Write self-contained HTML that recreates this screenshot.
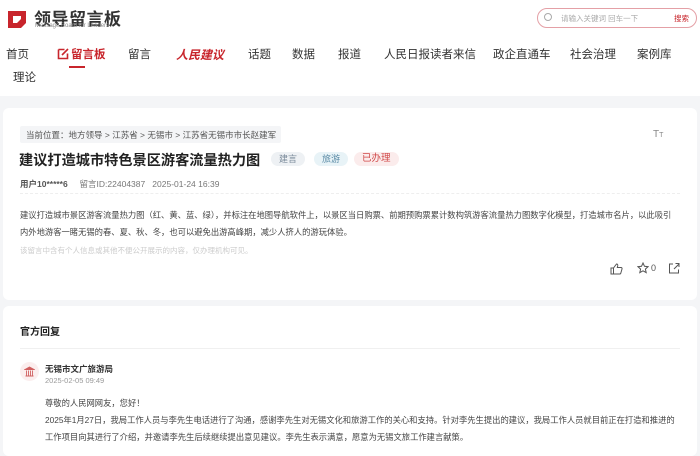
<!DOCTYPE html>
<html><head><meta charset="utf-8"><style>
*{margin:0;padding:0;box-sizing:border-box}
body{width:700px;height:445px;overflow:hidden;background:#f4f5f7;font-family:"Liberation Sans","Noto Sans CJK SC",sans-serif;color:#333;position:relative}
.hdr{position:absolute;left:0;top:0;width:700px;height:96px;background:#fff}
.abs{position:absolute;white-space:nowrap}
.nav{font-size:11.5px;color:#333;top:46px}
.card{position:absolute;left:3px;width:694px;background:#fff;border-radius:6px}
.tag{display:inline-block;font-size:9px;padding:0 8px;height:14px;line-height:14px;border-radius:7px;position:absolute;top:152px}
</style></head><body>
<div class="hdr"></div>
<svg class="abs" style="left:6px;top:8px" width="22" height="22" viewBox="0 0 22 22"><path d="M2 3h18v12l-5 5H2z" fill="#c8252c"/><path d="M7 8h8v7H7z" fill="#fff"/><path d="M11 15l4-4v4z" fill="#c8252c"/></svg>
<div class="abs" style="left:34px;top:5px;font-size:17px;font-weight:bold;color:#333;letter-spacing:0.5px">领导留言板</div>
<div class="abs" style="left:35px;top:23px;font-size:6px;color:#888">Message Board for Leaders</div>
<div class="abs" style="left:537px;top:8px;width:160px;height:20px;border:1px solid #e4a0a6;border-radius:10px"></div>
<div class="abs" style="left:544px;top:13px;width:8px;height:8px;border:1px solid #aaa;border-radius:50%"></div>
<div class="abs" style="left:561px;top:13px;font-size:7.5px;color:#aaa">请输入关键词 回车一下</div>
<div class="abs" style="left:674px;top:13px;font-size:7.5px;color:#c8252c">搜索</div>
<div class="abs nav" style="left:6px">首页</div>
<svg class="abs" style="left:57px;top:47px" width="13" height="13" viewBox="0 0 13 13"><path d="M1.5 2.5h6M1.5 2.5v9h9v-5" stroke="#c8252c" stroke-width="1.6" fill="none"/><path d="M5 8l6-6" stroke="#c8252c" stroke-width="1.6"/></svg>
<div class="abs nav" style="left:71px;color:#c8252c;font-weight:bold">留言板</div>
<div class="abs" style="left:69px;top:66px;width:16px;height:2px;background:#c8252c"></div>
<div class="abs nav" style="left:128px">留言</div>
<div class="abs nav" style="left:176px;color:#c8252c;font-weight:bold;font-style:italic;font-size:12px">人民建议</div>
<div class="abs nav" style="left:248px">话题</div>
<div class="abs nav" style="left:292px">数据</div>
<div class="abs nav" style="left:338px">报道</div>
<div class="abs nav" style="left:384px">人民日报读者来信</div>
<div class="abs nav" style="left:493px">政企直通车</div>
<div class="abs nav" style="left:570px">社会治理</div>
<div class="abs nav" style="left:637px">案例库</div>
<div class="abs nav" style="left:13px;top:69px">理论</div>

<div class="card" style="top:108px;height:192px"></div>
<div class="abs" style="left:20px;top:126px;width:261px;height:17px;background:#f4f5f7;border-radius:2px"></div>
<div class="abs" style="left:26px;top:129px;font-size:8.5px;color:#555">当前位置：地方领导 &gt; 江苏省 &gt; 无锡市 &gt; 江苏省无锡市市长赵建军</div>
<div class="abs" style="left:653px;top:129px;font-size:10px;color:#888">T<span style="font-size:7px">T</span></div>
<div class="abs" style="left:19px;top:150px;font-size:14.2px;font-weight:bold;color:#222">建议打造城市特色景区游客流量热力图</div>
<span class="tag" style="left:271px;background:#eef1f4;color:#7a8a9a">建言</span>
<span class="tag" style="left:314px;background:#e8f3f7;color:#5a8aa5">旅游</span>
<span class="tag" style="left:354px;background:#fbecec;color:#d04848;font-size:9.5px">已办理</span>
<div class="abs" style="left:20px;top:178px;font-size:8.5px;color:#777"><b style="color:#555">用户10*****6</b>&nbsp;&nbsp;&nbsp;&nbsp;&nbsp;留言ID:22404387&nbsp;&nbsp;&nbsp;2025-01-24 16:39</div>
<div class="abs" style="left:20px;top:193px;width:660px;border-top:1px dashed #eee"></div>
<div class="abs" style="left:20px;top:207px;font-size:8.3px;color:#444;line-height:17px">建议打造城市景区游客流量热力图（红、黄、蓝、绿），并标注在地图导航软件上，以景区当日购票、前期预购票累计数构筑游客流量热力图数字化模型，打造城市名片，以此吸引<br>内外地游客一睹无锡的春、夏、秋、冬，也可以避免出游高峰期，减少人挤人的游玩体验。</div>
<div class="abs" style="left:20px;top:245px;font-size:7.5px;color:#ccc">该留言中含有个人信息或其他不便公开展示的内容，仅办理机构可见。</div>
<svg class="abs" style="left:610px;top:263px" width="13" height="12" viewBox="0 0 13 12"><path d="M1 5h2.5v6H1zM3.5 5l3-4c1 0 1.5.7 1.2 2L7.3 4.5H11c.8 0 1.3.7 1 1.5l-1.3 4.5c-.2.4-.5.5-1 .5H3.5" stroke="#555" fill="none"/></svg>
<svg class="abs" style="left:637px;top:262px" width="12" height="12" viewBox="0 0 12 12"><path d="M6 1l1.5 3.3 3.5.4-2.6 2.4.8 3.5L6 8.8 2.8 10.6l.8-3.5L1 4.7l3.5-.4z" stroke="#555" fill="none"/></svg>
<div class="abs" style="left:651px;top:263px;font-size:9px;color:#555">0</div>
<svg class="abs" style="left:668px;top:262px" width="12" height="12" viewBox="0 0 12 12"><path d="M5 2H1.5v9h9V7.5M6 7l5-5M7.5 1.5H11V5" stroke="#555" fill="none"/></svg>

<div class="card" style="top:306px;height:150px"></div>
<div class="abs" style="left:20px;top:323px;font-size:10px;font-weight:bold;color:#222">官方回复</div>
<div class="abs" style="left:20px;top:348px;width:660px;border-top:1px solid #f0f0f0"></div>
<div class="abs" style="left:20px;top:362px;width:19px;height:19px;border-radius:50%;background:#fbeeee"></div>
<svg class="abs" style="left:24px;top:366px" width="11" height="11" viewBox="0 0 11 11"><path d="M1 3.5L5.5 1 10 3.5zM1.5 10h8M2.5 4.5v5M4.5 4.5v5M6.5 4.5v5M8.5 4.5v5" stroke="#d06060" fill="#d06060" stroke-width="0.9"/></svg>
<div class="abs" style="left:45px;top:363px;font-size:8.5px;font-weight:bold;color:#333">无锡市文广旅游局</div>
<div class="abs" style="left:45px;top:376px;font-size:7.5px;color:#999">2025-02-05 09:49</div>
<div class="abs" style="left:45px;top:395px;font-size:8.3px;color:#444;line-height:17px">尊敬的人民网网友，您好！<br>2025年1月27日，我局工作人员与李先生电话进行了沟通，感谢李先生对无锡文化和旅游工作的关心和支持。针对李先生提出的建议，我局工作人员就目前正在打造和推进的<br>工作项目向其进行了介绍，并邀请李先生后续继续提出意见建议。李先生表示满意，愿意为无锡文旅工作建言献策。</div>
</body></html>
